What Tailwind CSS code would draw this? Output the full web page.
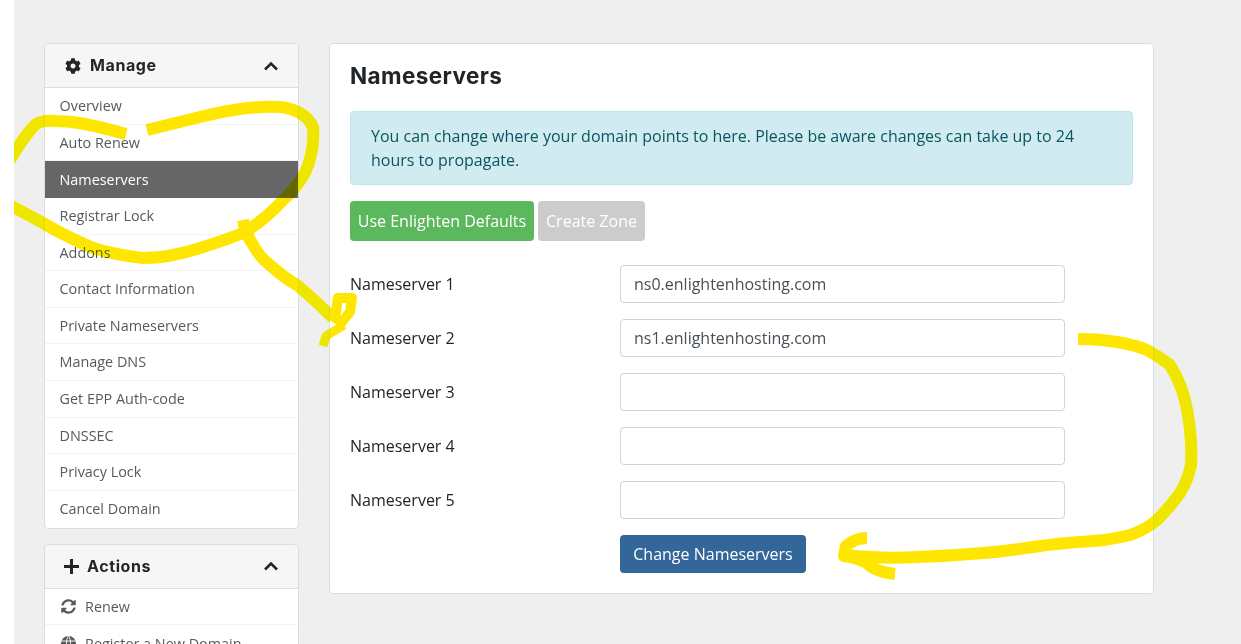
<!DOCTYPE html>
<html lang="en">

<head>
    <meta charset="UTF-8">
    <title>Nameservers</title>
    <script src="https://cdn.jsdelivr.net/npm/@tailwindcss/browser@4"></script>
</head>

<body class="bg-white font-['Open_Sans',sans-serif] text-[#495057]">
    <div class="relative h-[644px] w-[1241px] overflow-hidden">
        <div class="ml-[14px] h-full bg-[#efefef] pl-[30px] pt-[43px]">
            <div class="flex items-start gap-[30px]">

                <!-- Sidebar -->
                <div class="flex w-[255px] flex-col gap-[15.3px]">
                    <div class="rounded border border-[#ddd] bg-white">
                        <div class="flex h-[44px] items-center justify-between rounded-t border-b border-[#ddd] bg-[#f6f6f6] pl-[20px] pr-[20px]">
                            <div class="flex items-center gap-[9px] font-['Inter',sans-serif] text-[16px] font-bold tracking-[0.6px] text-[#212529]">
                                <svg class="h-[16px] w-[16px]" viewBox="0 0 512 512" fill="#212529"><path d="M487.4 315.7l-42.6-24.6c4.3-23.2 4.3-47 0-70.2l42.6-24.6c4.9-2.8 7.1-8.6 5.5-14-11.1-35.6-30-67.8-54.7-94.6-3.8-4.1-10-5.1-14.8-2.3L380.8 110c-17.9-15.4-38.5-27.3-60.8-35.1V25.8c0-5.6-3.9-10.5-9.4-11.7-36.7-8.2-74.3-7.8-109.2 0-5.5 1.2-9.4 6.1-9.4 11.7V75c-22.2 7.9-42.8 19.8-60.8 35.1L88.7 85.5c-4.9-2.8-11-1.9-14.8 2.3-24.7 26.7-43.6 58.9-54.7 94.6-1.7 5.4.6 11.2 5.5 14L67.3 221c-4.3 23.2-4.3 47 0 70.2l-42.6 24.6c-4.9 2.8-7.1 8.6-5.5 14 11.1 35.6 30 67.8 54.7 94.6 3.8 4.1 10 5.1 14.8 2.3l42.6-24.6c17.9 15.4 38.5 27.3 60.8 35.1v49.2c0 5.6 3.9 10.5 9.4 11.7 36.7 8.2 74.3 7.8 109.2 0 5.5-1.2 9.4-6.1 9.4-11.7v-49.2c22.2-7.9 42.8-19.8 60.8-35.1l42.6 24.6c4.9 2.8 11 1.9 14.8-2.3 24.7-26.7 43.6-58.9 54.7-94.6 1.5-5.5-.7-11.3-5.6-14.1zM256 336c-44.1 0-80-35.9-80-80s35.9-80 80-80 80 35.9 80 80-35.9 80-80 80z"/></svg>
                                <span class="pb-[2px]">Manage</span>
                            </div>
                            <svg class="h-[10px] w-[14px]" viewBox="0 0 14 10" fill="none" stroke="#212529" stroke-width="2.6"><path d="M1 8.5 7 2.5l6 6"/></svg>
                        </div>
                        <div class="pt-[0.2px] text-[14.4px] text-[#58595b]">
                            <div class="flex h-[36.62px] items-center border-b border-[#f3f3f3] px-[14.5px]">Overview</div>
                            <div class="flex h-[36.62px] items-center border-b border-[#f3f3f3] px-[14.5px]">Auto Renew</div>
                            <div class="flex h-[36.62px] items-center bg-[#666666] px-[14.5px] text-white">Nameservers</div>
                            <div class="flex h-[36.62px] items-center border-b border-[#f3f3f3] px-[14.5px]">Registrar Lock</div>
                            <div class="flex h-[36.62px] items-center border-b border-[#f3f3f3] px-[14.5px]">Addons</div>
                            <div class="flex h-[36.62px] items-center border-b border-[#f3f3f3] px-[14.5px]">Contact Information</div>
                            <div class="flex h-[36.62px] items-center border-b border-[#f3f3f3] px-[14.5px]">Private Nameservers</div>
                            <div class="flex h-[36.62px] items-center border-b border-[#f3f3f3] px-[14.5px]">Manage DNS</div>
                            <div class="flex h-[36.62px] items-center border-b border-[#f3f3f3] px-[14.5px]">Get EPP Auth-code</div>
                            <div class="flex h-[36.62px] items-center border-b border-[#f3f3f3] px-[14.5px]">DNSSEC</div>
                            <div class="flex h-[36.62px] items-center border-b border-[#f3f3f3] px-[14.5px]">Privacy Lock</div>
                            <div class="flex h-[36.62px] items-center px-[14.5px]">Cancel Domain</div>
                        </div>
                    </div>

                    <div class="rounded border border-[#ddd] bg-white">
                        <div class="flex h-[44px] items-center justify-between rounded-t border-b border-[#ddd] bg-[#f6f6f6] pl-[19px] pr-[20px]">
                            <div class="flex items-center gap-[8px] font-['Inter',sans-serif] text-[16px] font-bold tracking-[0.6px] text-[#212529]">
                                <svg class="h-[15px] w-[15px]" viewBox="0 0 15 15" fill="#212529"><path d="M6 0h3v6h6v3H9v6H6V9H0V6h6z"/></svg>
                                <span>Actions</span>
                            </div>
                            <svg class="h-[10px] w-[14px]" viewBox="0 0 14 10" fill="none" stroke="#212529" stroke-width="2.6"><path d="M1 8.5 7 2.5l6 6"/></svg>
                        </div>
                        <div class="text-[14.4px] text-[#58595b]">
                            <div class="flex h-[36.62px] items-center gap-[9px] border-b border-[#f3f3f3] px-[16px]">
                                <svg class="h-[15px] w-[15px]" viewBox="0 0 512 512" fill="#58595b"><path d="M370.72 133.28C339.458 104.008 298.888 87.962 255.848 88c-77.458.068-144.328 53.178-162.791 126.85-1.344 5.363-6.122 9.15-11.651 9.15H24.103c-7.498 0-13.194-6.807-11.807-14.176C33.933 94.924 134.813 8 256 8c66.448 0 126.791 26.136 171.315 68.685L463.03 40.97C478.149 25.851 504 36.559 504 57.941V192c0 13.255-10.745 24-24 24H345.941c-21.382 0-32.09-25.851-16.971-40.971l41.75-41.749zM32 296h134.059c21.382 0 32.09 25.851 16.971 40.971l-41.75 41.75c31.262 29.273 71.835 45.319 114.876 45.28 77.418-.07 144.315-53.144 162.787-126.849 1.344-5.363 6.122-9.15 11.651-9.15h57.304c7.498 0 13.194 6.807 11.807 14.176C478.067 417.076 377.187 504 256 504c-66.448 0-126.791-26.136-171.315-68.685L48.97 471.03C33.851 486.149 8 475.441 8 454.059V320c0-13.255 10.745-24 24-24z"/></svg>
                                Renew
                            </div>
                            <div class="flex h-[36.62px] items-center gap-[9px] px-[16px]">
                                <svg class="h-[15px] w-[15px]" viewBox="0 0 14 14"><circle cx="7" cy="7" r="7" fill="#58595b"/><path d="M0 4.7h14M0 9.3h14M7 0C4.5 3 4.5 11 7 14M7 0c2.5 3 2.5 11 0 14" fill="none" stroke="#fff" stroke-width=".9"/></svg>
                                Register a New Domain
                            </div>
                        </div>
                    </div>
                </div>

                <!-- Main card -->
                <div class="h-[551px] w-[825px] rounded border border-[#ddd] bg-white px-[20px] pt-[19px]">
                    <h2 class="font-['Inter',sans-serif] text-[22.5px] font-bold leading-[26px] tracking-[0.4px] text-[#212529]">Nameservers</h2>
                    <div class="mt-[22px] rounded border border-[#bee5eb] bg-[#d1ecf1] px-[20px] py-[12px] text-[16px] leading-[24px] text-[#0c5460]">
                        You can change where your domain points to here. Please be aware changes can take up to 24 hours to propagate.
                    </div>
                    <div class="mt-[16px] flex gap-[4px] text-[16px]">
                        <div class="flex h-[40px] w-[184px] items-center justify-center rounded bg-[#5cb85c] text-white">Use Enlighten Defaults</div>
                        <div class="flex h-[40px] w-[107px] items-center justify-center rounded bg-[#cccccc] text-white">Create Zone</div>
                    </div>
                    <div class="mt-[24px] flex flex-col gap-[16px] text-[16px]">
                        <div class="flex items-center">
                            <label class="w-[270px] text-[#212529]">Nameserver 1</label>
                            <input type="text" value="ns0.enlightenhosting.com" class="h-[38px] w-[445px] rounded border border-[#ced4da] bg-white px-[13px] text-[#495057]">
                        </div>
                        <div class="flex items-center">
                            <label class="w-[270px] text-[#212529]">Nameserver 2</label>
                            <input type="text" value="ns1.enlightenhosting.com" class="h-[38px] w-[445px] rounded border border-[#ced4da] bg-white px-[13px] text-[#495057]">
                        </div>
                        <div class="flex items-center">
                            <label class="w-[270px] text-[#212529]">Nameserver 3</label>
                            <input type="text" class="h-[38px] w-[445px] rounded border border-[#ced4da] bg-white px-[13px]">
                        </div>
                        <div class="flex items-center">
                            <label class="w-[270px] text-[#212529]">Nameserver 4</label>
                            <input type="text" class="h-[38px] w-[445px] rounded border border-[#ced4da] bg-white px-[13px]">
                        </div>
                        <div class="flex items-center">
                            <label class="w-[270px] text-[#212529]">Nameserver 5</label>
                            <input type="text" class="h-[38px] w-[445px] rounded border border-[#ced4da] bg-white px-[13px]">
                        </div>
                        <div class="pl-[270px]">
                            <div class="flex h-[38px] w-[186px] items-center justify-center rounded bg-[#336699] text-white">Change Nameservers</div>
                        </div>
                    </div>
                </div>
            </div>
        </div>

        <!-- Highlighter scribbles on top of the screenshot, cut off at the white strip -->
        <svg class="pointer-events-none absolute left-[14px] top-0 mix-blend-darken" width="1227" height="644" viewBox="14 0 1227 644" fill="none" stroke="#ffe600" stroke-width="12" stroke-linejoin="round">
            <path d="M126 134 Q100 127 85 124 Q70 121 55 121 Q41 120 35 125 Q25 135 10 160"/>
            <path d="M147 130 L200 117 Q250 105 280 107 Q305 110 313 127 Q315 150 305 173 Q295 190 283 200 Q265 220 243 233 Q220 242 200 248 Q170 258 143 258 Q115 255 93 248 Q65 236 43 223 L8 204"/>
            <path d="M243 220 Q246 235 252 243 Q260 258 270 265 Q283 277 297 285 Q315 300 333 318"/>
            <path stroke-width="10" d="M338 298 L352 298 L350 312 L342 322 L335 318 Z"/>
            <path stroke-width="9" d="M344 325 L326 336 L323 346"/>
            <path d="M1078 339 Q1100 339 1117 342 Q1135 345 1147 350 Q1160 357 1170 365 Q1178 378 1183 393 Q1188 410 1190 430 Q1192 450 1191 465 Q1188 480 1180 493 Q1170 507 1157 520 Q1145 530 1130 535 Q1110 540 1093 541 Q1060 543 1033 547 Q1000 552 983 553 Q950 556 917 557 Q885 559 845 555"/>
            <path d="M867 538 Q855 538 846 546 L844 556 Q855 557 867 563 Q875 572 895 574"/>
        </svg>
    </div>
</body>

</html>
